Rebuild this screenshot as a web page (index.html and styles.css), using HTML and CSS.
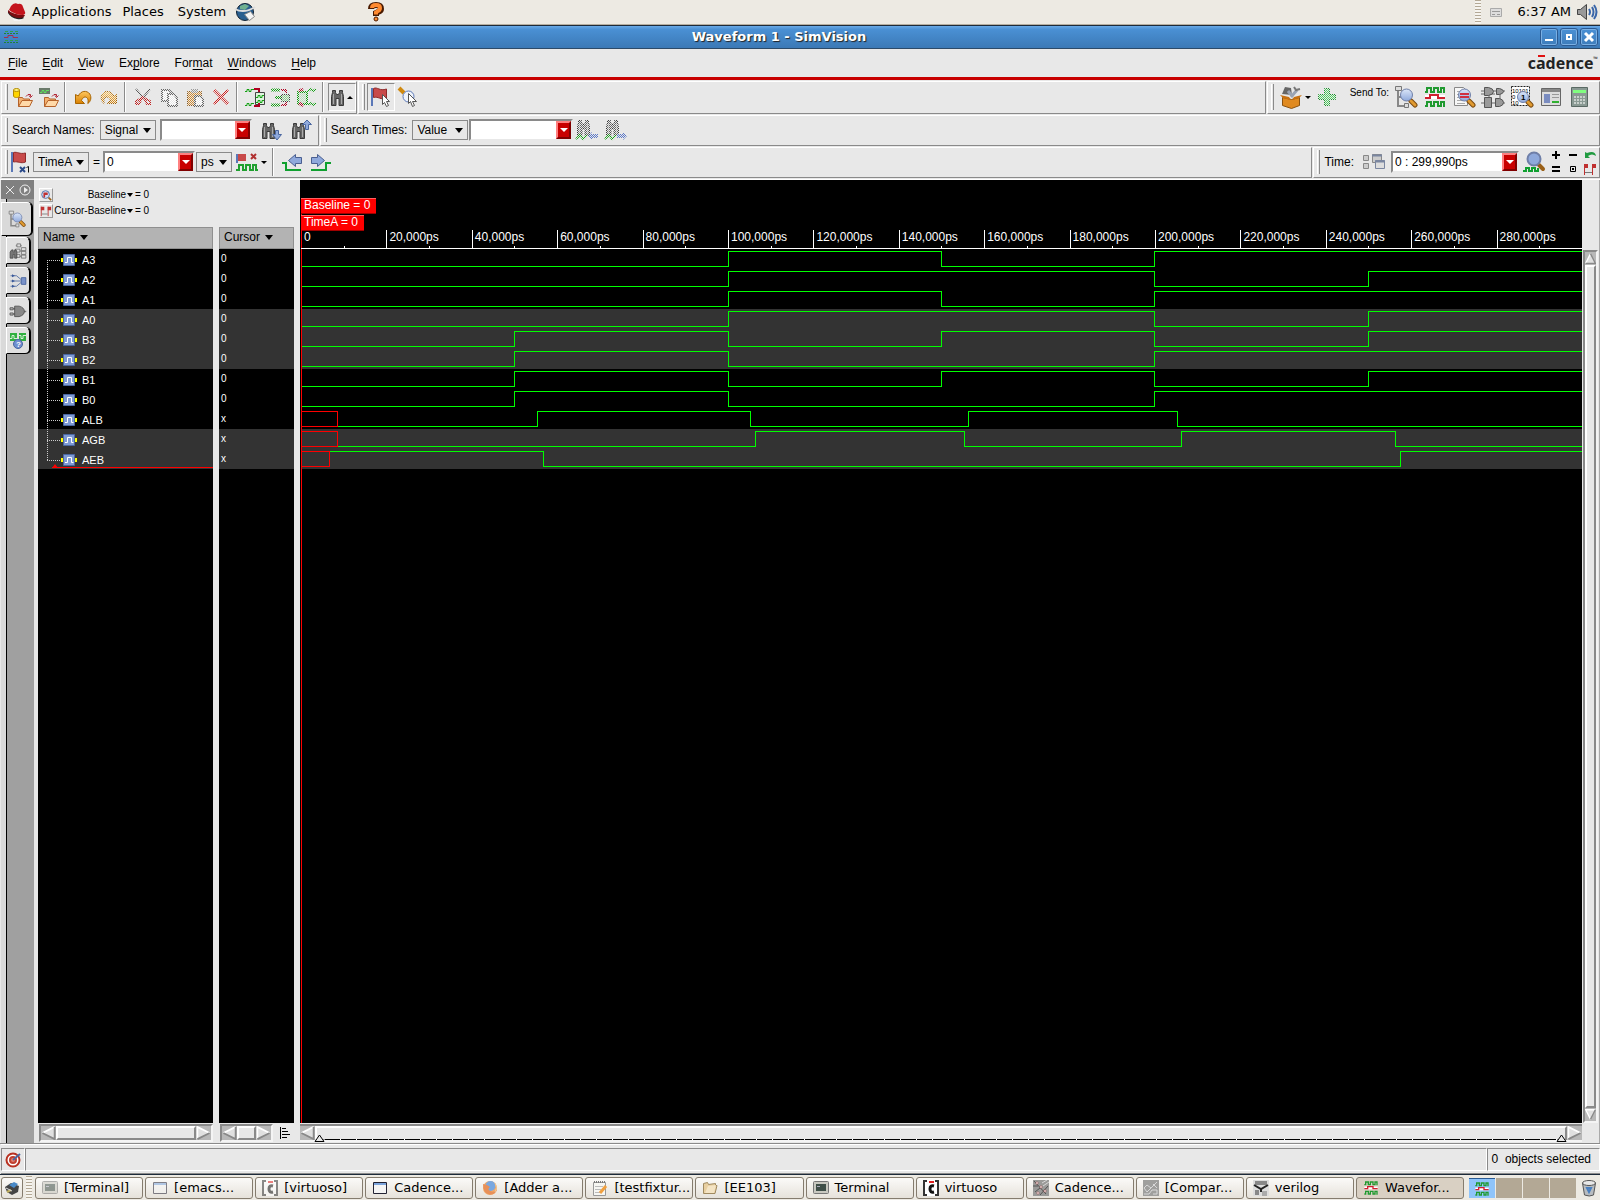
FILE: index.html
```html
<!DOCTYPE html>
<html lang="en">
<head>
<meta charset="utf-8">
<title>Waveform 1 - SimVision</title>
<link rel="stylesheet" href="styles.css">
</head>
<body>
<svg class="defs" width="0" height="0" aria-hidden="true">
  <defs>
    <pattern id="checker" width="2" height="2" patternUnits="userSpaceOnUse"><path fill="#fff" d="M0 0h1v1h-1zM1 1h1v1h-1z"/></pattern>
    <mask id="stipple" maskUnits="userSpaceOnUse" x="0" y="0" width="24" height="24"><rect width="24" height="24" fill="url(#checker)"/></mask>
    <linearGradient id="ball" x2="0" y2="1"><stop offset="0" stop-color="#dbe6f8"/><stop offset="1" stop-color="#8fa9dc"/></linearGradient>
    <linearGradient id="gold" x2="0" y2="1"><stop offset="0" stop-color="#ffc860"/><stop offset="1" stop-color="#d88000"/></linearGradient>
  </defs>
  <symbol id="i-folder" viewBox="0 0 24 24"><path fill="#f3b270" stroke="#b5622a" d="M7.500 21.500v-9h4l1 1.500h6v2.500"/><path fill="#ffd9a8" stroke="#b5622a" d="M7.500 21.500l3.500-6h10.500l-3 6z"/><path fill="none" stroke="#b02030" d="M15 11.500l2-2h2.500v2M18 10.500l1.500 2 2-2"/></symbol>
  <symbol id="i-opendb" viewBox="0 0 24 24"><path fill="#ffd400" stroke="#b48a00" d="M2.500 5v6c0 2 6 2 6 0v-6"/><ellipse cx="5.500" cy="5" rx="3" ry="1.500" fill="#fff27a" stroke="#b48a00"/><use href="#i-folder"/></symbol>
  <symbol id="i-openwave" viewBox="0 0 24 24"><path fill="#6b7a6b" d="M2 3h11v6h-11z"/><path fill="none" stroke="#5fe05f" d="M3 7.500h2v-2h2v2h2v-2h3"/><use href="#i-folder"/></symbol>
  <symbol id="i-undo" viewBox="0 0 24 24"><path fill="url(#gold)" stroke="#a86400" d="M4.500 9.500v9h9l-3-3c1-3 4-5 6-2 .8 1.500.8 3 .3 5 3-2 4-6 2-9.500-3-4-9-3.500-11.500 2z"/></symbol>
  <symbol id="i-redo" viewBox="0 0 24 24"><g mask="url(#stipple)"><path fill="url(#gold)" stroke="#a86400" d="M19.500 9.500v9h-9l3-3c-1-3-4-5-6-2-.8 1.500-.8 3-.3 5-3-2-4-6-2-9.500 3-4 9-3.500 11.500 2z"/></g></symbol>
  <symbol id="i-cut" viewBox="0 0 24 24"><g mask="url(#stipple)" fill="none" stroke-width="2"><path stroke="#555" d="M5 4l8 10M19 4l-8 10"/><path stroke="#c02020" d="M13 13l6 3v3h-3zM11 13l-6 3v3h3z"/></g></symbol>
  <symbol id="i-copy" viewBox="0 0 24 24"><g mask="url(#stipple)" fill="#fff" stroke="#666" stroke-width="2"><path d="M5 5h7l3 3v8h-10z"/><path d="M11 9h6l3 4v8h-9z"/></g></symbol>
  <symbol id="i-paste" viewBox="0 0 24 24"><g mask="url(#stipple)"><path fill="#d08a30" stroke="#8a5a20" d="M4.500 6.500h14v14h-14z"/><path fill="#999" d="M8 4h7v4h-7z"/><path fill="#fff" stroke="#666" stroke-width="2" d="M12 11h5l3 3v7h-8z"/></g></symbol>
  <symbol id="i-delete" viewBox="0 0 24 24"><g mask="url(#stipple)"><path stroke="#d02020" stroke-width="3" d="M5 5l14 14M19 5l-14 14"/></g></symbol>
  <symbol id="i-expand" viewBox="0 0 24 24"><path fill="none" stroke="#12a012" d="M2 6.500h2v-2h2v2h2v-2h3M2 20.500h2v-2h2v2h2v-2h3"/><path fill="#dff5df" stroke="#444" d="M12.500 7.500h9v12h-9z"/><path fill="none" stroke="#12a012" d="M13 12.500h2v-2h2v2h2v-2h2M13 17.500h2v-2h2v2h2v-2h2"/><path fill="none" stroke="#b00020" stroke-width="2" d="M11 4h5v3M11 21h5v-3"/></symbol>
  <symbol id="i-collapse" viewBox="0 0 24 24"><g mask="url(#stipple)"><path fill="none" stroke="#12a012" stroke-width="3" d="M2 5h9M2 20h9M6 12.500h10"/><path fill="#8c8" stroke="#444" d="M12.500 9.500h8v7h-8z"/><path fill="none" stroke="#b00020" stroke-width="2" d="M12 5h5v3M12 20h5v-3"/></g></symbol>
  <symbol id="i-contract" viewBox="0 0 24 24"><g mask="url(#stipple)"><path fill="#bdb" stroke="#12a012" stroke-width="2" d="M3 7h9v12h-9z"/><path fill="none" stroke="#12a012" stroke-width="2" d="M13 6l3-2 2 2 3-2M13 20l3-2 2 2 3-2"/><path stroke="#b00020" stroke-width="3" d="M4 6l4-2M4 18l4 3"/></g></symbol>
  <symbol id="i-bino" viewBox="0 0 24 24"><path fill="#666" stroke="#3a3a3a" d="M5.500 20.500v-9l1-4v-2h3v2l1 2h2l1-2v-2h3v2l1 4v9h-4.500v-7h-3v7z"/><path stroke="#aaa" d="M7.500 9v10M15.500 9v10"/></symbol>
  <symbol id="i-flag" viewBox="0 0 24 24"><path stroke="#5b78b8" stroke-width="2" d="M3 3v18"/><path fill="#c84a4a" stroke="#8f2a2a" d="M4.500 3.500c4-2 6 3 13 .5v9c-6 2.500-8-2-13-.5z"/></symbol>
  <symbol id="i-flagptr" viewBox="0 0 24 24"><use href="#i-flag"/><path fill="#fff" stroke="#555" d="M13.500 9.500v10l2-2 2 4 2-1-2-4h3z"/></symbol>
  <symbol id="i-zoomptr" viewBox="0 0 24 24"><path stroke="#d08a10" stroke-width="4" d="M3 3l5 5"/><circle cx="12.500" cy="11.500" r="5.500" fill="#eef3fb" stroke="#5b78b8"/><path fill="#fff" stroke="#555" d="M12.500 8.500v10l2-2 2 5 2-1-2-4h4z"/></symbol>
  <symbol id="i-toolbox" viewBox="0 0 24 24"><path fill="#666" d="M3 9l3-7 6 1 1 7z"/><path stroke="#9aa4b4" stroke-width="3" d="M9 6l5 6M12 12l6-7"/><path fill="none" stroke="#777" stroke-width="2" d="M15 2l2 3 4-1"/><path fill="#e08a20" stroke="#8a5210" d="M3.500 12.500l9 2 8-2v8l-8 3-9-3z"/><path fill="#c87010" d="M1 10l3 3 8 2-2-3zM23 10l-3 3-7 2 2-3z"/></symbol>
  <symbol id="i-plus" viewBox="0 0 24 24"><g mask="url(#stipple)"><path fill="#50d060" stroke="#209030" d="M9.500 3.500h5v6h6v5h-6v6h-5v-6h-6v-5h6z"/></g></symbol>
  <symbol id="i-lens" viewBox="0 0 24 24"><path stroke="#7a4a10" stroke-width="5" stroke-linecap="round" d="M17 16l4 4"/><path stroke="#e09a30" stroke-width="3" stroke-linecap="round" d="M17 16l4 4"/><circle cx="12.500" cy="10" r="6" fill="url(#ball)" stroke="#6f7fa8"/></symbol>
  <symbol id="i-browse" viewBox="0 0 24 24"><path fill="none" stroke="#888" stroke-width="2" d="M4 4v17h10M4 12h5"/><path fill="#ddd" stroke="#777" d="M1.500 1.500h6v4h-6zM10.500 18.500h4v4h-4z"/><use href="#i-lens"/></symbol>
  <symbol id="i-wave" viewBox="0 0 24 24"><g fill="none"><path stroke="#fff" stroke-width="4" d="M2 12h20"/><path stroke="#209a30" stroke-width="2" d="M2 7h2v-4h4v4h3v-4h4v4h3v-4h3v4h1M2 21h2v-4h4v4h3v-4h4v4h3v-4h3v4h1"/><path stroke="#d02030" stroke-width="2" d="M2 13h5v-3h8v3h7"/></g></symbol>
  <symbol id="i-src" viewBox="0 0 24 24"><path fill="#f7f7f7" stroke="#888" d="M2.500 2.500h9l4 4v14h-13z"/><path stroke="#aaa" d="M5 6.500h5M5 9.500h6M5 12.500h4M5 15.500h6M5 18.500h8"/><use href="#i-lens"/><path stroke="#d03040" stroke-width="2" d="M8 9h9M8 12h9"/></symbol>
  <symbol id="i-schem" viewBox="0 0 24 24"><path fill="none" stroke="#666" d="M0 6h24M0 9h5M8 13v-4h6M0 18h24M19 9v6"/><path fill="#999" stroke="#555" d="M3.500 2.500h4q5 1 5 4t-5 4h-4zM15.500 3.500h3q4 1 4 3t-4 3h-3zM3.500 12.500h7v10h-7zM14.500 13.500h4q4 1 4 4t-4 4h-4z"/></symbol>
  <symbol id="i-prop" viewBox="0 0 24 24"><path fill="#ddd" stroke="#666" d="M2.500 3.500h19v17h-19z"/><path fill="#888" d="M3 4h18v3h-18z"/><path fill="#7a8cc0" d="M5 9h6v9h-6z"/><path stroke="#999" d="M13 9.500h7M13 12.500h7"/><path fill="#30b030" d="M13 16h7v2h-7z"/></symbol>
  <symbol id="i-calc" viewBox="0 0 24 24"><path fill="#8a9a94" stroke="#5a6a64" d="M3.500 2.500h16v19h-16z"/><path fill="#80ff80" d="M5 5h13v3h-13z"/><path stroke="#c8d0cc" stroke-width="2" stroke-dasharray="2 1" d="M6 12h12M6 15h12M6 18h12"/></symbol>
  <symbol id="i-binodown" viewBox="0 0 24 24"><use href="#i-bino" x="-3"/><path fill="#8fa9dc" stroke="#4a66a0" d="M15.500 12.500h3v4h3l-4.500 5.500-4.500-5.500h3z"/></symbol>
  <symbol id="i-binoup" viewBox="0 0 24 24"><use href="#i-bino" x="-3"/><path fill="#8fa9dc" stroke="#4a66a0" d="M15.500 11.500v-5h-3l4.500-4.500 4.500 4.500h-3v5z"/></symbol>
  <symbol id="i-binoleft" viewBox="0 0 24 24"><g mask="url(#stipple)"><use href="#i-bino" x="-3" y="-3"/><path fill="none" stroke="#12a012" stroke-width="2" d="M1 21l4-4 3 4 4-4"/><path fill="#5b78c8" d="M13 18l4-4v2h6v4h-6v2z"/></g></symbol>
  <symbol id="i-binoright" viewBox="0 0 24 24"><g mask="url(#stipple)"><use href="#i-bino" x="-3" y="-3"/><path fill="none" stroke="#12a012" stroke-width="2" d="M1 21l4-4 3 4 4-4"/><path fill="#5b78c8" d="M23 18l-4-4v2h-6v4h6v2z"/></g></symbol>
  <symbol id="i-flagx1" viewBox="0 0 24 24"><path stroke="#5b78b8" stroke-width="2" d="M4 2v20"/><path fill="#c84a4a" stroke="#8f2a2a" d="M5.500 2.500c4-1 6 2 12 .5v9c-5 2-7-1-12 0z"/><path stroke="#2a4a8a" stroke-width="2" d="M12 17l5 5M17 17l-5 5"/><path fill="none" stroke="#111" d="M18.500 17.500l2-1v6"/></symbol>
  <symbol id="i-flagwave" viewBox="0 0 24 24"><path stroke="#5b78b8" stroke-width="2" d="M2 4v9"/><path fill="#c84a4a" d="M3 4h8v7h-8z"/><path stroke="#b03030" stroke-width="2" d="M16 4l5 5M21 4l-5 5"/><path fill="none" stroke="#20a030" stroke-width="2" d="M1 20h3v-5h4v5h3v-5h4v5h3v-5h3v5h2"/></symbol>
  <symbol id="i-prev" viewBox="0 0 24 24"><path fill="#8fa9dc" stroke="#4a5f90" d="M8.500 10.500l7-6v3h6v6h-6v3z"/><path fill="none" stroke="#10a030" stroke-width="2" d="M2 13h4v7h15"/></symbol>
  <symbol id="i-next" viewBox="0 0 24 24"><path fill="#8fa9dc" stroke="#4a5f90" d="M15.500 10.500l-7-6v3h-6v6h6v3z"/><path fill="none" stroke="#10a030" stroke-width="2" d="M2 20h15v-7h5"/></symbol>
  <symbol id="i-link" viewBox="0 0 24 24"><path fill="#ccc" stroke="#888" d="M1.500 5.500h5v5h-5zM1.500 13.500h5v5h-5zM10.500 4.500h9v8h-9z"/><path fill="#ddd" stroke="#7a86a0" d="M13.500 10.500h9v8h-9z"/><path stroke="#7a86a0" stroke-width="2" d="M10 5.500h10M13 11.500h10"/></symbol>
  <symbol id="i-zoomfit" viewBox="0 0 24 24"><path stroke="#9a6018" stroke-width="4" stroke-linecap="round" d="M17 15l4 4"/><circle cx="12" cy="9" r="6.500" fill="#8fa9dc" stroke="#6f7fa8" stroke-width="2"/><path fill="none" stroke="#10a030" stroke-width="2" d="M1 21h3v-3h3v3h3v-3h3v3h3v-3"/></symbol>
  <symbol id="i-baseicon" viewBox="0 0 14 14"><circle cx="6.500" cy="6.500" r="4.500" fill="#cfe0f8" stroke="#4a66a0"/><path stroke="#9a6018" stroke-width="2" d="M10 10l3 3"/><path fill="#c03030" d="M4 4h5v3h-3v3h-2z"/></symbol>
  <symbol id="i-span" viewBox="0 0 14 14"><path fill="none" stroke="#c03030" d="M1.500 2v11M9.500 2v11"/><path fill="#c03030" d="M1 2h4v4h-4zM9 2h4v4h-4z"/><path stroke="#777" d="M2 10.500h7"/></symbol>
  <symbol id="i-tiles" viewBox="0 0 24 24"><path fill="none" stroke="#666" d="M5 12v8M9 5h8M9 12h8M9 19h8"/><path fill="#ddd" stroke="#666" d="M10.500 2.500h5v4h-5zM8.500 9.500h6v4h-6zM16.500 7.500h6v4h-6zM16.500 12.500h6v4h-6zM16.500 17.500h6v4h-6zM9.500 16.500h5v4h-5z"/><path fill="#777" stroke="#444" d="M1.500 21.500v-8l2-3h2v3h2v-3h2l1 3v8h-3v-5h-2v5z"/></symbol>
  <symbol id="i-pins" viewBox="0 0 24 24"><path fill="none" stroke="#3a5a9a" d="M2 5h8l6 5M2 12h14M2 19h8l6-5"/><path fill="#3a5a9a" d="M4 3l4 2-4 2zM4 10l4 2-4 2zM4 17l4 2-4 2z"/><path fill="#7a92c8" stroke="#3a5a9a" d="M16.500 7.500h6v9h-6z"/></symbol>
  <symbol id="i-gate" viewBox="0 0 24 24"><path stroke="#777" stroke-width="2" d="M1 9h8M1 16h8M18 12.500h5"/><path fill="#aaa" stroke="#555" d="M1.500 7.500h4v3h-4zM1.500 14.500h4v3h-4z"/><path fill="#888" stroke="#444" d="M7.500 5.500h6q7 2 7 7t-7 7h-6z"/></symbol>
  <symbol id="i-sig" viewBox="0 0 32 20"><path fill="#ff0" d="M14 9h3v4h-3zM27 9h3v4h-3z"/><path fill="#7f9bd4" stroke="#4a66a0" d="M16.500 5.500h11v11h-11z"/><path fill="none" stroke="#fff" d="M18 13.500h2.500v-5h4v5h2"/></symbol>
  <symbol id="i-tri-l" viewBox="0 0 16 16"><path fill="#e0e0e0" d="M1 8l14-7v14z"/><path fill="none" stroke="#fff" stroke-width="2" d="M1 8l14-7"/><path fill="none" stroke="#888" stroke-width="2" d="M1 8l14 7v-14"/></symbol>
  <symbol id="i-tri-r" viewBox="0 0 16 16"><path fill="#e0e0e0" d="M15 8l-14-7v14z"/><path fill="none" stroke="#fff" stroke-width="2" d="M1 15v-14l14 7"/><path stroke="#888" stroke-width="2" d="M15 8l-14 7"/></symbol>
  <symbol id="i-term" viewBox="0 0 16 16"><rect x=".5" y="1.500" width="15" height="12" rx="1" fill="#c8c8c0" stroke="#777"/><path fill="#3f4f48" d="M3 4h10v7h-10z"/><path stroke="#aab" d="M4 6.500h3"/></symbol>
  <symbol id="i-win" viewBox="0 0 16 16"><path fill="#f4f4f4" stroke="currentColor" d="M1.500 2.500h13v11h-13z"/><path fill="#7ba4dc" d="M2 3h12v2h-12z"/></symbol>
  <symbol id="i-virt" viewBox="0 0 16 16"><path fill="#fff" stroke="#333" stroke-width="2" d="M1 1h14v14h-14z"/><path fill="#fff" d="M4 0h8v16h-8z"/><path fill="none" stroke="#111" stroke-width="3" d="M11 6q-4-1-4 3t4 3"/><path stroke="#e02020" stroke-width="2" d="M6 2h5"/></symbol>
  <symbol id="i-fox" viewBox="0 0 16 16"><circle cx="8" cy="8" r="7" fill="#f0a868"/><circle cx="8.500" cy="6" r="5" fill="#7aa8e0"/><path fill="#e89058" d="M1 4q0 8 5 10 6 2 9-4-4 3-7 1-3-2 0-4l-3-2z"/><path fill="none" stroke="#f4c890" d="M13 3q3 5 0 9"/></symbol>
  <symbol id="i-note" viewBox="0 0 16 16"><path fill="#f6f6f2" stroke="#999" d="M1.500 2.500h12v13h-12z"/><path stroke="#777" stroke-dasharray="1 1" stroke-width="2" d="M2 2h11"/><path stroke="#bbb" d="M3 6.500h8M3 9.500h6M3 12.500h5"/><path stroke="#f0a040" stroke-width="3" d="M8 13l6-7"/></symbol>
  <symbol id="i-dir" viewBox="0 0 16 16"><path fill="#e8cfa0" stroke="#a08a60" d="M1.500 13.500v-10l4-1 1 2 7-1v2l1.500 0-2 8z"/><path fill="#f4e4c4" d="M3 13l3-7 8-1-2 8z"/></symbol>
  <symbol id="i-gray" viewBox="0 0 16 16"><path fill="#9a9a98" d="M0 0h16v16h-16z"/><path stroke="#555" d="M0 6h5M2 12l5-4M7 15l8-9M1 1l12 13"/><path stroke="#d8d8d8" d="M9 3l5-3M10 6l6-4"/><path fill="#eee" stroke="#a05050" stroke-width=".5" d="M3 2h2v2h-2zM7 6h2v2h-2zM4 12h2v2h-2zM11 10h2v2h-2z"/></symbol>
  <symbol id="i-sch" viewBox="0 0 16 16"><path fill="#9f9f9d" d="M0 0h16v16h-16z"/><path fill="none" stroke="#d8d8d8" d="M1 8l3-3 4 3-4 4zM8 8l6-6M1 14h5l3-4h5v4h-4M10 4l4 4"/></symbol>
  <symbol id="i-ver" viewBox="0 0 16 16"><path fill="#ddd" d="M0 0h16v16h-16z"/><path fill="#888" d="M2 1h12v4h-12zM2 10h4v5h-4z"/><path fill="none" stroke="#222" stroke-width="2" d="M1 5l7 4 7-4M8 9v3"/><path fill="#aaa" d="M9 11h5v5h-5z"/></symbol>
  <symbol id="i-stop" viewBox="0 0 11 8"><path fill="#e8e8e8" stroke="#000" d="M1 7.500l4.500-6.500 4.500 6.500z"/></symbol>
</svg>

<header class="panel">
  <nav class="panel-menu">
    <a href="#" class="brand"><svg width="20" height="20" viewBox="0 0 20 20"><path fill="#f4f4f4" d="M3 11l13 3-2 5h-7z"/><path fill="#222" d="M1 9q5 6 15 6l1 1q-3 2-7 1-6-1-9-6z"/><path fill="#7a0c10" d="M1 8q5 5 17 5-1 3-5 3-8 0-12-6z"/><path fill="#c4141c" d="M2 8l2-4q3-4 7-2 4-1 5 3l2 5q1 2-2 3-8 0-14-5z"/></svg>Applications</a>
    <a href="#">Places</a>
    <a href="#">System</a>
    <a href="#" class="launch" aria-label="Web browser"><svg width="22" height="22" viewBox="0 0 22 22"><circle cx="11" cy="11" r="8.500" fill="#2a5f8f" stroke="#123"/><path fill="#6fb090" d="M6 5l5-2 4 2-4 4-5-1z"/><path fill="none" stroke="#ddd" stroke-width="2" d="M1 8q9 5 20-2"/><path fill="#f4f4f4" stroke="#888" d="M10.500 13.500l6-3 4 5-5 4z"/></svg></a>
  </nav>
  <a href="#" class="help-launch" aria-label="Help"><svg width="16" height="20" viewBox="0 0 16 20"><path fill="none" stroke="#4a1a00" stroke-width="6" d="M3 7q0-4 5-4t5 4q0 2-3 3l-2 1v3"/><path fill="none" stroke="#ff8a30" stroke-width="4" d="M4 6q0-3 4-3t4 3q0 2-2 3l-2 1.500v2"/><circle cx="8" cy="17" r="2" fill="#ff8a30" stroke="#4a1a00"/></svg></a>
  <div class="tray">
    <span class="grip"></span>
    <svg width="12" height="12" viewBox="0 0 12 12"><path fill="#ddd" stroke="#aaa" d="M.5 2.500h11v8h-11z"/><path stroke="#999" d="M2 5.500h8M2 8.500h3M7 8.500h3"/></svg>
    <time class="clock">6:37 AM</time>
    <svg width="22" height="20" viewBox="0 0 22 20"><path fill="#999" stroke="#444" d="M1.500 7.500h3l6-5v15l-6-5h-3z"/><path fill="none" stroke="#3a66a8" stroke-width="2" d="M13 7q2 3 0 6M16 5q3 5 0 10M18 3q5 7 0 14"/></svg>
  </div>
</header>

<div class="titlebar">
  <svg width="14" height="14" viewBox="0 0 14 14"><g fill="none"><path stroke="#20803a" stroke-dasharray="2 1" d="M0 3.500h14M0 12.500h14"/><path stroke="#30a04a" stroke-dasharray="3 2" d="M1 1.500h13M1 10.500h13"/><path stroke="#a03050" d="M0 7.500h4v-2h5v2h5"/></g></svg>
  <h1>Waveform 1 - SimVision</h1>
  <div class="win-buttons">
    <button aria-label="Minimize"><svg width="18" height="18" viewBox="0 0 18 18"><path fill="#fff" d="M5 11h8v2h-8z"/></svg></button>
    <button aria-label="Maximize"><svg width="18" height="18" viewBox="0 0 18 18"><path fill="none" stroke="#fff" stroke-width="2" d="M7 7h4v4h-4z"/></svg></button>
    <button aria-label="Close"><svg width="18" height="18" viewBox="0 0 18 18"><path stroke="#fff" stroke-width="3" d="M5 5l8 8M13 5l-8 8"/></svg></button>
  </div>
</div>

<div class="menubar">
  <nav>
    <a href="#"><u>F</u>ile</a><a href="#"><u>E</u>dit</a><a href="#"><u>V</u>iew</a><a href="#">Ex<u>p</u>lore</a><a href="#">For<u>m</u>at</a><a href="#"><u>W</u>indows</a><a href="#"><u>H</u>elp</a>
  </nav>
  <div class="logo">c<span class="abar">a</span>dence<sup>™</sup></div>
</div>

<div class="toolbars">
  <div class="row row-tall">
    <div class="group">
      <span class="handle"></span>
      <button class="tool" aria-label="Open database"><svg><use href="#i-opendb"/></svg></button>
      <button class="tool" aria-label="Open waveform"><svg><use href="#i-openwave"/></svg></button>
      <span class="sep"></span>
      <button class="tool" aria-label="Undo"><svg><use href="#i-undo"/></svg></button>
      <button class="tool" aria-label="Redo"><svg><use href="#i-redo"/></svg></button>
      <span class="sep"></span>
      <button class="tool" aria-label="Cut"><svg><use href="#i-cut"/></svg></button>
      <button class="tool" aria-label="Copy"><svg><use href="#i-copy"/></svg></button>
      <button class="tool" aria-label="Paste"><svg><use href="#i-paste"/></svg></button>
      <button class="tool" aria-label="Delete"><svg><use href="#i-delete"/></svg></button>
      <span class="sep"></span>
      <button class="tool" aria-label="Expand"><svg><use href="#i-expand"/></svg></button>
      <button class="tool" aria-label="Collapse"><svg><use href="#i-collapse"/></svg></button>
      <button class="tool" aria-label="Contract"><svg><use href="#i-contract"/></svg></button>
      <span class="sep"></span>
      <button class="tool pressed" aria-label="Search"><svg viewBox="0 0 24 24"><use href="#i-bino" x="-4" width="24" height="24"/><path d="M17 14l3-3 3 3z"/></svg></button>
    </div>
    <div class="group grow">
      <span class="handle"></span>
      <button class="tool pressed" aria-label="Select cursor"><svg><use href="#i-flagptr"/></svg></button>
      <button class="tool" aria-label="Zoom pointer"><svg><use href="#i-zoomptr"/></svg></button>
    </div>
    <div class="group sendto">
      <span class="handle"></span>
      <button class="tool drop" aria-label="Tools"><svg><use href="#i-toolbox"/></svg></button>
      <button class="tool add" aria-label="Add"><svg><use href="#i-plus"/></svg></button>
      <span class="small-label">Send To:</span>
      <button class="tool wide" aria-label="Design browser"><svg><use href="#i-browse"/></svg></button>
      <button class="tool wide" aria-label="Waveform"><svg><use href="#i-wave"/></svg></button>
      <button class="tool wide" aria-label="Source browser"><svg><use href="#i-src"/></svg></button>
      <button class="tool wide" aria-label="Schematic"><svg><use href="#i-schem"/></svg></button>
      <button class="tool wide" aria-label="Memory"><svg viewBox="0 0 24 24"><path fill="#fff" stroke="#222" stroke-dasharray="2 1" d="M1.500 1.500h18v19h-18z"/><text x="2" y="8" font-size="6">10101</text><text x="2" y="14" font-size="6">0</text><text x="2" y="20" font-size="6">10</text><path stroke="#7a4a10" stroke-width="5" stroke-linecap="round" d="M18 17l3 3"/><path stroke="#e09a30" stroke-width="3" stroke-linecap="round" d="M18 17l3 3"/><circle cx="13" cy="12" r="5.500" fill="url(#ball)" stroke="#6f7fa8"/><text x="11" y="15" font-size="8" font-weight="bold">1</text></svg></button>
      <button class="tool wide" aria-label="Properties"><svg><use href="#i-prop"/></svg></button>
      <button class="tool wide" aria-label="Calculator"><svg><use href="#i-calc"/></svg></button>
    </div>
  </div>

  <div class="row">
    <div class="group names">
      <span class="handle"></span>
      <label for="kind">Search Names:</label>
      <span class="pick pick-m"><select id="kind"><option>Signal</option></select></span>
      <span class="combo combo-m"><input type="text" aria-label="Name to find"><button aria-label="Name history"></button></span>
      <button class="tool find" aria-label="Find next"><svg><use href="#i-binodown"/></svg></button>
      <button class="tool find" aria-label="Find previous"><svg><use href="#i-binoup"/></svg></button>
    </div>
    <div class="group grow">
      <span class="handle"></span>
      <label for="timekind">Search Times:</label>
      <span class="pick pick-m"><select id="timekind"><option>Value</option></select></span>
      <span class="combo combo-l"><input type="text" aria-label="Value to find"><button aria-label="Value history"></button></span>
      <button class="tool wide" aria-label="Search back"><svg><use href="#i-binoleft"/></svg></button>
      <button class="tool wide" aria-label="Search forward"><svg><use href="#i-binoright"/></svg></button>
    </div>
  </div>

  <div class="row">
    <div class="group grow cursorgroup">
      <span class="handle"></span>
      <svg class="glyph"><use href="#i-flagx1"/></svg>
      <span class="pick pick-m"><select aria-label="Cursor"><option>TimeA</option></select></span>
      <label for="ctime" class="eq">=</label>
      <span class="combo combo-m"><input id="ctime" type="text" value="0"><button aria-label="Time history"></button></span>
      <span class="pick pick-s"><select aria-label="Unit"><option>ps</option></select></span>
      <button class="tool drop" aria-label="Cursors"><svg><use href="#i-flagwave"/></svg></button>
      <span class="sep"></span>
      <button class="tool wide" aria-label="Previous edge"><svg><use href="#i-prev"/></svg></button>
      <button class="tool wide" aria-label="Next edge"><svg><use href="#i-next"/></svg></button>
    </div>
    <div class="group timegroup">
      <span class="handle"></span>
      <label for="range">Time:</label>
      <svg class="glyph"><use href="#i-link"/></svg>
      <span class="combo combo-xl"><input id="range" type="text" value="0 : 299,990ps"><button aria-label="Range history"></button></span>
      <button class="tool" aria-label="Zoom full"><svg><use href="#i-zoomfit"/></svg></button>
      <div class="zoomgrid">
        <button aria-label="Zoom in"><svg viewBox="0 0 14 14"><path stroke="#000" stroke-width="2" d="M3 7h8M7 3v8"/></svg></button>
        <button aria-label="Zoom out"><svg viewBox="0 0 14 14"><path stroke="#000" stroke-width="2" d="M3 7h8"/></svg></button>
        <button aria-label="Zoom previous"><svg viewBox="0 0 14 14"><path fill="#209a40" d="M2 4v6h5l-2-2q4-3 8 0-1-6-9-3z"/></svg></button>
        <button aria-label="Zoom equal"><svg viewBox="0 0 14 14"><path stroke="#000" stroke-width="2" d="M3 5h8M3 9h8"/></svg></button>
        <button aria-label="Zoom fit"><svg viewBox="0 0 14 14"><path fill="none" stroke="#000" d="M4.500 4.500h5v5h-5z"/><path d="M6 6h2v2h-2z"/></svg></button>
        <button aria-label="Zoom cursors"><svg><use href="#i-span"/></svg></button>
      </div>
    </div>
  </div>
</div>

<main class="workspace">
  <aside class="sidebar">
    <div class="side-head">
      <svg viewBox="0 0 12 12"><path stroke="#eee" d="M2 2l8 8M10 2l-8 8"/></svg>
      <svg viewBox="0 0 12 12"><circle cx="6" cy="6" r="5" fill="none" stroke="#eee"/><path fill="#eee" d="M5 3l4 3-4 3z"/></svg>
    </div>
    <div class="tabs">
      <button class="tab active" aria-label="Design browser"><svg><use href="#i-browse"/></svg></button>
      <button class="tab" aria-label="Design search"><svg><use href="#i-tiles"/></svg></button>
      <button class="tab" aria-label="Signal flow"><svg><use href="#i-pins"/></svg></button>
      <button class="tab" aria-label="Gates"><svg><use href="#i-gate"/></svg></button>
      <button class="tab" aria-label="Compare"><svg viewBox="0 0 18 18"><path fill="#30b040" d="M1 1h7v8h-7zM10 1h7v8h-7z"/><path fill="none" stroke="#d8f0d8" d="M1 6.500h2v-3h2v3h3M10 3.500h2v3h2v-3h3"/><circle cx="9" cy="12" r="4.500" fill="#6f8fd0" stroke="#4a66a0"/><text x="7" y="15" font-size="8" font-weight="bold" fill="#fff">?</text></svg></button>
    </div>
  </aside>

  <section class="signals">
    <div class="info">
      <button aria-label="Baseline marker"><svg><use href="#i-baseicon"/></svg></button><span class="info-name">Baseline<i class="caret"></i></span><span>= 0</span>
      <button aria-label="Cursor to baseline"><svg><use href="#i-span"/></svg></button><span class="info-name">Cursor-Baseline<i class="caret"></i></span><span>= 0</span>
    </div>
    <div class="columns">
      <div class="col col-name">
        <button class="col-head">Name<i class="caret"></i></button>
        <ul class="list tree">
          <li><svg><use href="#i-sig"/></svg>A3</li>
          <li><svg><use href="#i-sig"/></svg>A2</li>
          <li><svg><use href="#i-sig"/></svg>A1</li>
          <li class="alt"><svg><use href="#i-sig"/></svg>A0</li>
          <li class="alt"><svg><use href="#i-sig"/></svg>B3</li>
          <li class="alt"><svg><use href="#i-sig"/></svg>B2</li>
          <li><svg><use href="#i-sig"/></svg>B1</li>
          <li><svg><use href="#i-sig"/></svg>B0</li>
          <li><svg><use href="#i-sig"/></svg>ALB</li>
          <li class="alt"><svg><use href="#i-sig"/></svg>AGB</li>
          <li class="alt insert-after"><svg><use href="#i-sig"/></svg>AEB</li>
        </ul>
        <div class="foot"><div class="scroll"><svg><use href="#i-tri-l"/></svg><span class="thumb"></span><svg><use href="#i-tri-r"/></svg></div></div>
      </div>
      <div class="col col-cursor">
        <button class="col-head">Cursor<i class="caret"></i></button>
        <ul class="list values">
          <li>0</li><li>0</li><li>0</li><li class="alt">0</li><li class="alt">0</li><li class="alt">0</li><li>0</li><li>0</li><li>x</li><li class="alt">x</li><li class="alt">x</li>
        </ul>
        <div class="foot"><div class="scroll"><svg><use href="#i-tri-l"/></svg><span class="thumb"></span><svg><use href="#i-tri-r"/></svg></div><svg class="outline" viewBox="0 0 14 14"><path stroke="#000" d="M2.500 1v12M4 2.500h4M4 5.500h6M4 8.500h8M4 11.500h5"/></svg></div>
      </div>
    </div>
  </section>

  <section class="waves">
    <div class="screen">
      <div class="traces">
        <span class="tag">Baseline = 0</span>
        <span class="tag">TimeA = 0</span>
        <ol class="ruler">
          <li>0</li><li>20,000ps</li><li>40,000ps</li><li>60,000ps</li><li>80,000ps</li><li>100,000ps</li><li>120,000ps</li><li>140,000ps</li><li>160,000ps</li><li>180,000ps</li><li>200,000ps</li><li>220,000ps</li><li>240,000ps</li><li>260,000ps</li><li>280,000ps</li>
        </ol>
        <svg class="plot" viewBox="0 0 1280 220" preserveAspectRatio="none" role="img" aria-label="Signal waveforms">
          <path fill="#333" d="M0 60h1280v60h-1280zM0 180h1280v40h-1280z"/>
          <g fill="none" stroke="#0f0">
            <path d="M0 17.500H426.500V2.500H639.500V17.500H852.500V2.500H1280"/>
            <path d="M0 37.500H426.500V22.500H852.500V37.500H1066.500V22.500H1280"/>
            <path d="M0 57.500H426.500V42.500H639.500V57.500H852.500V42.500H1280"/>
            <path d="M0 77.500H426.500V62.500H852.500V77.500H1066.500V62.500H1280"/>
            <path d="M0 97.500H212.500V82.500H426.500V97.500H639.500V82.500H852.500V97.500H1066.500V82.500H1280"/>
            <path d="M0 117.500H212.500V102.500H426.500V117.500H852.500V102.500H1280"/>
            <path d="M0 137.500H212.500V122.500H426.500V137.500H639.500V122.500H852.500V137.500H1066.500V122.500H1280"/>
            <path d="M0 157.500H212.500V142.500H426.500V157.500H852.500V142.500H1280"/>
            <path d="M36 177.500H235.500V162.500H448.500V177.500H666.500V162.500H875.500V177.500H1280"/>
            <path d="M36 197.500H453.500V182.500H662.500V197.500H879.500V182.500H1093.500V197.500H1280"/>
            <path d="M28 202.500H241.500V217.500H1098.500V202.500H1280"/>
          </g>
          <path fill="none" stroke="#f00" d="M0 162.500H35.500V177.500H0M0 182.500H35.500V197.500H0M0 202.500H27.500V217.500H0"/>
        </svg>
      </div>
    </div>
    <div class="foot range"><div class="scroll"><svg><use href="#i-tri-l"/></svg><span class="thumb"></span><svg><use href="#i-tri-r"/></svg><svg class="stop stop-start"><use href="#i-stop"/></svg><svg class="stop stop-end"><use href="#i-stop"/></svg></div></div>
  </section>

  <div class="vbar">
    <div class="scroll vertical"><svg viewBox="0 0 16 16"><path fill="#e0e0e0" d="M8 1l7 14h-14z"/><path stroke="#fff" stroke-width="2" d="M8 1l-7 14"/><path fill="none" stroke="#888" stroke-width="2" d="M8 1l7 14h-14"/></svg><span class="thumb"></span><svg viewBox="0 0 16 16"><path fill="#e0e0e0" stroke="#fff" stroke-width="2" d="M8 15l-7-14h14"/><path stroke="#888" stroke-width="2" d="M8 15l7-14"/></svg></div>
  </div>
</main>

<footer class="status">
  <div class="cell target"><svg width="18" height="18" viewBox="0 0 18 18"><circle cx="9" cy="9" r="6.500" fill="#fff" stroke="#b83020" stroke-width="2"/><circle cx="9" cy="9" r="3" fill="#e08070" stroke="#c04030" stroke-width="2"/><path stroke="#4a66a0" stroke-width="2" d="M9 9l7-6"/></svg></div>
  <div class="cell grow"></div>
  <div class="cell selected">0&nbsp; objects selected</div>
</footer>

<div class="taskbar">
  <button class="desktop" aria-label="Show desktop"><svg width="16" height="16" viewBox="0 0 16 16"><path fill="#444" d="M1 7l6-4 8 3-1 6-6 3-5-3z"/><path fill="#4a8ac8" d="M5 5l5-3 4 2-4 4z"/><path stroke="#c0b060" stroke-width="2" d="M3 12l4-2"/><path stroke="#ddd" d="M2 8l6 3"/></svg></button>
  <span class="grip"></span>
  <div class="tasks">
    <button class="min"><svg><use href="#i-term"/></svg>[Terminal]</button>
    <button class="min"><svg><use href="#i-win"/></svg>[emacs...</button>
    <button class="min"><svg><use href="#i-virt"/></svg>[virtuoso]</button>
    <button><svg><use href="#i-win"/></svg>Cadence...</button>
    <button><svg><use href="#i-fox"/></svg>[Adder a...</button>
    <button><svg><use href="#i-note"/></svg>[testfixtur...</button>
    <button><svg><use href="#i-dir"/></svg>[EE103]</button>
    <button><svg><use href="#i-term"/></svg>Terminal</button>
    <button><svg><use href="#i-virt"/></svg>virtuoso</button>
    <button><svg><use href="#i-gray"/></svg>Cadence...</button>
    <button><svg><use href="#i-sch"/></svg>[Compar...</button>
    <button><svg><use href="#i-ver"/></svg>verilog</button>
    <button class="current"><svg><use href="#i-wave"/></svg>Wavefor...</button>
  </div>
  <div class="pager">
    <button class="on" aria-label="Workspace 1"><svg width="16" height="16"><use href="#i-wave"/></svg></button><button aria-label="Workspace 2"></button><button aria-label="Workspace 3"></button><button aria-label="Workspace 4"></button>
  </div>
  <button class="trash" aria-label="Trash"><svg width="16" height="18" viewBox="0 0 16 18"><path fill="#b8bcc0" stroke="#555" d="M1.500 4l2 12q5 2 9 0l2-12"/><ellipse cx="8" cy="4" rx="6.500" ry="2.500" fill="#e8e8e8" stroke="#555"/><path fill="none" stroke="#4a80c0" stroke-width="2" d="M6 9h4l-2 4z"/></svg></button>
</div>
</body>
</html>
```
FILE: styles.css
```css
* { box-sizing: border-box; }

body {
  margin: 0;
  min-height: 100vh;
  display: flex;
  flex-direction: column;
  background: #e8e8e8;
  color: #000;
  font: 12px/16px "Liberation Sans", sans-serif;
}

svg { display: block; flex: none; }
a { color: inherit; text-decoration: none; }
ul, ol { list-style: none; margin: 0; padding: 0; }
button, input, select { font: inherit; color: inherit; margin: 0; padding: 0; border: 0; background: none; border-radius: 0; }
.defs { position: absolute; }
.grow { flex: 1; }

/* desktop panel */
.panel {
  display: flex;
  align-items: center;
  height: 25px;
  padding: 0 2px 0 7px;
  background: #edeae3;
  border-bottom: 1px solid #b5aea0;
  font: 13px/24px "DejaVu Sans", sans-serif;
}
.panel-menu { display: flex; align-items: center; gap: 14px; }
.brand { display: flex; align-items: center; gap: 5px; margin-right: -3px; }
.launch { margin-left: -6px; }
.help-launch { margin-left: 112px; }
.tray { display: flex; align-items: center; margin-left: auto; }
.grip {
  width: 6px;
  height: 24px;
  background: repeating-linear-gradient(#b3a895 0 1px, #f6f4ef 1px 3px);
}
.tray .grip { margin-right: 9px; }
.clock { margin: 0 5px 0 16px; }

.titlebar {
  display: flex;
  align-items: center;
  height: 24px;
  padding: 0 2px 0 4px;
  border-top: 1px solid #1c2a3a;
  border-bottom: 1px solid #2c4a68;
  background: linear-gradient(#6aaae6, #4a90d4 15%, #3b79b6);
}
.titlebar h1 {
  flex: 1;
  margin: 0;
  text-align: center;
  color: #fff;
  font: bold 13px/24px "DejaVu Sans", sans-serif;
  text-shadow: 1px 1px 1px #222;
}
.win-buttons { display: flex; gap: 2px; }
.win-buttons button {
  width: 18px;
  height: 18px;
  border-radius: 3px;
  box-shadow: inset 0 0 0 1px #2a5a92, inset 0 0 0 2px #7ab0e4;
}

.menubar {
  display: flex;
  justify-content: space-between;
  align-items: center;
  height: 31px;
  padding: 0 2px 0 8px;
  border-bottom: 3px solid #c80000;
}
.menubar nav { display: flex; gap: 15px; }
.menubar u { text-underline-offset: 2px; }
.logo { color: #222; font: bold 16px/24px "Open Sans", sans-serif; }
.logo sup { font-size: 6px; line-height: 6px; vertical-align: 8px; }
.abar { position: relative; }
.abar::before { content: ""; position: absolute; left: 2px; right: 1px; top: 3px; height: 2px; background: #e01010; }

/* toolbars */
.toolbars {
  display: flex;
  flex-direction: column;
  gap: 1px;
  padding: 1px 0 1px 1px;
  border-bottom: 1px solid #fff;
}
.row { display: flex; gap: 1px; height: 31px; }
.row-tall { height: 33px; }
.group {
  display: flex;
  align-items: center;
  border: 1px solid;
  border-color: #fff #8a8a8a #8a8a8a #fff;
  padding: 0 0 1px 3px;
}
.handle {
  align-self: stretch;
  width: 3px;
  margin: 2px 2px 2px 0;
  border-left: 1px solid #fff;
  border-right: 1px solid #8a8a8a;
}
.sep { align-self: stretch; width: 8px; background: linear-gradient(to right, transparent 2px, #8a8a8a 2px 3px, #fff 3px 4px, transparent 4px); }
.tool {
  display: flex;
  align-items: center;
  justify-content: center;
  width: 26px;
  height: 26px;
}
.tool svg, .glyph { width: 24px; height: 24px; }
.tool text, .tab text { font-family: "Liberation Sans", sans-serif; }
.tool.wide { width: 29px; justify-content: flex-start; padding-left: 2px; }
.tool.find { width: 30px; }
.tool.pressed { width: 28px; height: 28px; border: 1px solid; border-color: #8a8a8a #fff #fff #8a8a8a; }
.tool.drop { width: 38px; }
.tool.drop::after, .caret, .pick::after {
  content: "";
  border: 4px solid transparent;
  border-top: 5px solid #000;
  border-bottom: 0;
}
.tool.drop::after { border-width: 3px 3px 0; margin-left: 2px; }
.sendto { padding-right: 4px; }
.add { margin-right: 10px; }
.small-label { align-self: flex-start; margin: 2px 3px 0 0; font-size: 10px; line-height: 18px; }
.group label { margin-left: 2px; }
.names { padding-right: 1px; }

.pick {
  display: grid;
  align-items: center;
  height: 20px;
  margin-left: 5px;
  border: 1px solid #8a8a8a;
}
.pick select, .pick::after { grid-area: 1 / 1; }
.pick select { appearance: none; width: 100%; padding-left: 4px; outline: 0; }
.pick::after { justify-self: end; margin-right: 4px; pointer-events: none; }
.pick-m { width: 56px; }
.pick-s { width: 36px; }
.eq { padding: 0 2px; }

.combo {
  display: flex;
  height: 22px;
  margin-left: 4px;
  border: 2px solid;
  border-color: #8a8a8a #e8e8e8 #e8e8e8 #8a8a8a;
  background: #fff;
}
.combo input { flex: 1; width: 0; padding-left: 2px; outline: 0; }
.combo button {
  display: grid;
  place-items: center;
  width: 15px;
  border: 2px solid;
  border-color: #ff8080 #800000 #800000 #ff8080;
  background: #c80000;
}
.combo button::after { content: ""; border: 4px solid transparent; border-top: 4px solid #fff; border-bottom: 0; }
.combo-m { width: 92px; }
.names .combo { margin-right: 5px; }
.combo-l { width: 104px; margin-left: 1px; }
.combo-xl { width: 128px; margin-right: 2px; }
.cursorgroup .glyph { margin-left: -2px; }
.cursorgroup .pick { margin-left: 1px; }
.cursorgroup .combo { margin-left: 1px; }
.timegroup { padding-right: 1px; }
.timegroup .glyph { margin: 0 1px 0 8px; }
.zoomgrid { display: grid; grid-template-columns: repeat(3, 17px); }
.zoomgrid button { display: grid; place-items: center; height: 14px; }
.zoomgrid svg { width: 14px; height: 14px; }

/* workspace */
.workspace { flex: 1; display: flex; padding-left: 1px; border-bottom: 1px solid #8a8a8a; }

.sidebar { display: flex; flex-direction: column; width: 33px; }
.side-head {
  display: flex;
  align-items: center;
  justify-content: space-around;
  height: 19px;
  padding: 0 2px;
  background: #808080;
}
.side-head svg { width: 12px; height: 12px; }
.tabs {
  flex: 1;
  display: flex;
  flex-direction: column;
  gap: 3px;
  padding-top: 3px;
  background: linear-gradient(to right, #d9d9d9 5px, #000 5px 6px, #a0a0a0 6px);
}
.tab {
  display: grid;
  place-items: center;
  width: 24px;
  height: 27px;
  margin-left: 5px;
  border: 1px solid;
  border-color: #fff #000 #000 #fff;
  border-radius: 0 5px 5px 0;
  box-shadow: 1px 0 #000;
  background: #e0e0e0;
}
.tab svg { width: 18px; height: 18px; }
.tab.active { width: 31px; height: 34px; margin: 0 0 -2px; background: #d9d9d9; }

.signals { display: flex; flex-direction: column; width: 256px; margin-left: 4px; }
.info {
  display: grid;
  grid-template-columns: 14px 78px auto;
  justify-content: start;
  align-items: center;
  column-gap: 2px;
  row-gap: 1px;
  height: 47px;
  padding: 8px 0 9px 1px;
  font-size: 10px;
  line-height: 14px;
}
.info svg { width: 12px; height: 12px; }
.info button { border: 1px solid; border-color: #fff #999 #999 #fff; width: 14px; height: 14px; }
.info-name { display: flex; align-items: center; justify-content: flex-end; white-space: nowrap; }
.info .caret { border-width: 4px 3px 0; margin-left: 1px; }

.columns { flex: 1; display: flex; gap: 6px; }
.col { display: flex; flex-direction: column; }
.col-name { width: 175px; }
.col-cursor { width: 75px; }
.col-head {
  display: flex;
  align-items: center;
  gap: 5px;
  height: 22px;
  padding: 0 0 2px 4px;
  border: 1px solid #8f8f8f;
  background: #b3b3b3;
}
.list { flex: 1; background: #000; color: #fff; font-size: 11px; line-height: 20px; }
.list li { height: 20px; }
.list .alt { background: #333; }
.tree li {
  position: relative;
  display: flex;
  gap: 3px;
  padding: 1px 0 0 9px;
}
.tree svg {
  width: 32px;
  height: 20px;
  margin-top: -1px;
  background:
    repeating-linear-gradient(to right, #ccc 0 1px, transparent 1px 2px) 0 11px / 14px 1px no-repeat,
    repeating-linear-gradient(#ccc 0 1px, transparent 1px 2px) 0 0 / 1px 20px no-repeat;
}
.tree li:first-child svg { background-position: 0 11px, 0 11px; }
.tree li:last-child svg { background-size: 14px 1px, 1px 11px; }
.insert-after::before { content: ""; position: absolute; left: 14px; right: 0; bottom: 1px; height: 1px; background: #f00; }
.insert-after::after { content: ""; position: absolute; left: 14px; bottom: 1px; border: 3px solid transparent; border-bottom: 4px solid #f00; border-top: 0; }
.values { font-size: 10px; }
.values li { padding-left: 2px; }

.foot { display: flex; align-items: center; height: 20px; padding-left: 1px; }
.scroll {
  flex: 1;
  display: flex;
  height: 18px;
  border: 2px solid;
  border-color: #8a8a8a #f4f4f4 #f4f4f4 #8a8a8a;
  background: #b8b8b8;
}
.scroll svg { width: 15px; height: 14px; }
.thumb {
  flex: 1;
  border: 2px solid;
  border-color: #fff #8a8a8a #8a8a8a #fff;
  background: #e8e8e8;
}
.outline { width: 14px; height: 14px; margin: 0 2px 0 5px; }

.waves { flex: 1; display: flex; flex-direction: column; margin-left: 6px; }
.screen { flex: 1; display: flex; padding: 18px 0 0 1px; background: #000; color: #fff; }
.traces { flex: 1; display: flex; flex-direction: column; align-items: flex-start; border-left: 1px solid #f00; }
.tag {
  height: 16px;
  margin: 0 0 1px -1px;
  padding: 0 6px 0 3px;
  background: #f00;
  line-height: 14px;
  box-shadow: inset 0 1px #ff6060, inset 0 -1px #a00000;
}
.ruler {
  align-self: stretch;
  display: grid;
  grid-template-columns: repeat(15, 1fr);
  height: 19px;
  margin: -2px 0 0 -1px;
  border-bottom: 1px solid #fff;
}
.ruler li {
  border-left: 1px solid #fff;
  padding-left: 2px;
  line-height: 14px;
  background: linear-gradient(#fff, #fff) 50% 100% / 1px 2px no-repeat;
}
.ruler li:first-child { border-color: #f00; }
.plot { width: 100%; height: 220px; shape-rendering: crispEdges; }
.plot path { vector-effect: non-scaling-stroke; }

.range { padding: 0; }
.range .scroll { position: relative; border-width: 2px 0; }
.range .thumb { border-bottom: 1px solid #8a8a8a; }
.range .scroll::after {
  content: "";
  position: absolute;
  left: 25px;
  right: 25px;
  bottom: 0;
  height: 1px;
  background: repeating-linear-gradient(to right, #000 0 15px, #fff 15px 16px);
}
.scroll .stop { position: absolute; bottom: -2px; width: 11px; height: 8px; }
.stop-start { left: 14px; }
.stop-end { right: 15px; }

.vbar { display: flex; width: 18px; padding: 70px 1px 20px; border-right: 1px solid #aaa; }
.scroll.vertical { flex-direction: column; height: auto; }
.scroll.vertical svg { width: 11px; height: 13px; }

/* status line */
.status { display: flex; height: 30px; margin-left: 1px; padding: 3px 0 2px; border-top: 1px solid #fff; border-bottom: 1px solid #8a8a8a; }
.cell { border: 1px solid; border-color: #8a8a8a #fff #fff #8a8a8a; }
.target { display: grid; place-items: center; width: 24px; }
.selected { padding: 0 8px 0 4px; line-height: 20px; }

/* task bar */
.taskbar {
  display: flex;
  align-items: center;
  height: 26px;
  padding: 1px 3px 0 1px;
  border-top: 1px solid #1c2a3a;
  background: #edeae3;
  font: 13px/20px "DejaVu Sans", sans-serif;
}
.desktop, .tasks button {
  border: 1px solid #857c6e;
  border-radius: 3px;
  background: linear-gradient(#fbfaf8, #e6e2da);
}
.desktop { display: grid; place-items: center; width: 22px; height: 22px; margin-right: 3px; }
.tasks { flex: 1; display: flex; gap: 2px; margin: 0 5px 0 3px; }
.tasks button {
  flex: 1;
  display: flex;
  align-items: center;
  gap: 6px;
  width: 0;
  height: 22px;
  padding-left: 6px;
  white-space: nowrap;
}
.tasks svg { width: 16px; height: 16px; color: #223; }
.tasks .min svg { opacity: .55; }
.tasks .current { background: #d9d0c3; }
.pager { display: flex; gap: 1px; height: 20px; }
.pager button { width: 26px; background: #b3a895; }
.pager .on { display: grid; place-items: center; background: #8fc4fa; border-top: 1px solid #2a5a92; }
.trash { margin-left: 5px; }
```
